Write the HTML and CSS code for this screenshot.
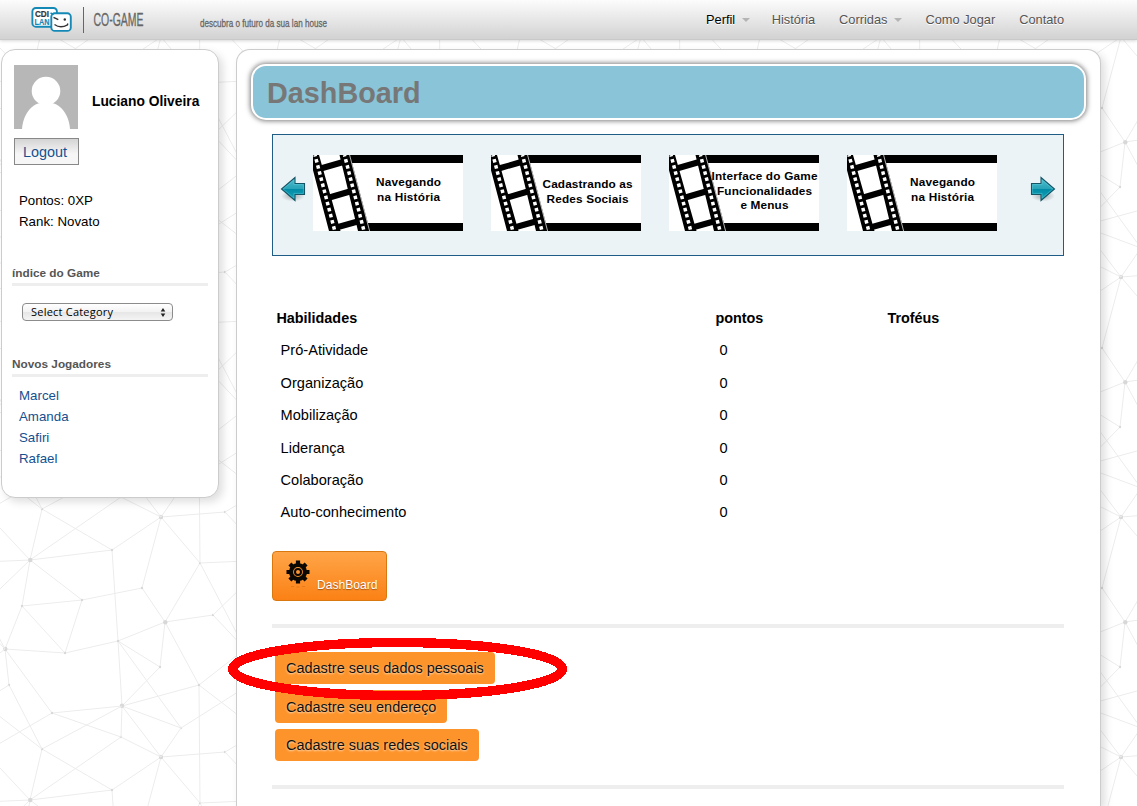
FILE: index.html
```html
<!DOCTYPE html>
<html lang="pt-BR">
<head>
<meta charset="utf-8">
<title>CO-GAME</title>
<link rel="stylesheet" href="styles.css">
</head>
<body>
<svg class="net" width="1137" height="806" aria-hidden="true">
  <defs>
    <g id="web">
      <path d="M42 29L30 80M42 29L112 70M112 70L30 80M112 70L161 37M30 80L-40 83M30 80L-27 135M30 80L-15 32M30 80L82 120M30 80L22 126M42 29L122 -14M30 80L121 17M112 70L118 161L122 226M161 37L142 108L82 120L22 126L65 173M22 126L5 169M82 120L65 173L5 169M65 173L118 161L165 142M118 161L160 187M118 161L181 248M142 108L165 142L160 187M165 142L200 83M165 142L213 135M165 142L199 205M160 187L122 226L199 205M122 226L181 248M122 226L52 233M122 226L121 257M122 226L161 277M52 233L121 257L161 277M181 248L161 277M161 37L225 32M161 37L200 83M200 83L245 169M199 205L200 323M213 135L245 169M199 205L245 169M199 205L282 269M181 248L249 205M52 233L-15 272M5 169L9 205L42 269M5 169L52 233" fill="none" stroke="#ececec"/>
      <g fill="#d8d8d8"><circle cx="30.3" cy="80" r="2.2"/><circle cx="161" cy="37" r="2.2"/><circle cx="165.3" cy="142.3" r="2.2"/><circle cx="122" cy="225.7" r="2.2"/><circle cx="5.3" cy="169" r="2.2"/>
      <circle cx="42" cy="29" r="1.2"/><circle cx="112" cy="70" r="1.2"/><circle cx="22" cy="126" r="1.2"/><circle cx="82" cy="120" r="1.2"/><circle cx="142" cy="108" r="1.2"/><circle cx="118" cy="161" r="1.2"/><circle cx="65" cy="173" r="1.2"/><circle cx="9" cy="205" r="1.2"/><circle cx="52" cy="233" r="1.2"/><circle cx="160" cy="187" r="1.2"/><circle cx="199" cy="205" r="1.2"/><circle cx="200" cy="83" r="1.2"/><circle cx="213" cy="135" r="1.2"/><circle cx="225" cy="32" r="1.2"/><circle cx="181" cy="8" r="1.2"/><circle cx="121" cy="17" r="1.2"/></g>
    </g>
    <pattern id="tile" width="240" height="240" patternUnits="userSpaceOnUse">
      <use href="#web"/><use href="#web" x="240"/><use href="#web" x="-240"/><use href="#web" y="240"/><use href="#web" y="-240"/><use href="#web" x="-240" y="-240"/><use href="#web" x="240" y="-240"/><use href="#web" x="-240" y="240"/><use href="#web" x="240" y="240"/>
    </pattern>
    <symbol id="film" viewBox="0 0 150 76">
      <rect width="150" height="76" fill="#fff"/>
      <path d="M36 0H150V8H38ZM53 68H150V76H56Z"/>
      <path d="M-4 0H6L27.500 76H16ZM26.500 0H37L57 76H45Z"/>
      <path d="M6 14L32 6.500M13 43.500L42 35M20 73.500L50 65" stroke="#000" stroke-width="6"/>
      <path d="M2 0L21.800 76M31.500 0L51 76" stroke="#fff" stroke-width="3.500" stroke-dasharray="3.500 2.800" stroke-dashoffset="2" fill="none"/>
      <path d="M36.600 0L56.600 76" stroke="#fff" stroke-width=".7"/>
    </symbol>
    <linearGradient id="teal" x1="0" y1="0" x2="0" y2="1"><stop offset="0" stop-color="#4ec0d0"/><stop offset=".48" stop-color="#2aa3b8"/><stop offset=".52" stop-color="#028ba6"/><stop offset="1" stop-color="#16a5b8"/></linearGradient>
    <radialGradient id="shade"><stop offset="0" stop-color="#000" stop-opacity=".3"/><stop offset="1" stop-color="#000" stop-opacity="0"/></radialGradient>
    <symbol id="arrow" viewBox="0 0 26 28">
      <ellipse cx="13" cy="21" rx="12" ry="5.500" fill="url(#shade)"/>
      <path d="M1.500 8.500H11V2.500L24.500 14L11 25.500V19.500H1.500Z" fill="url(#teal)" stroke="#155566" stroke-width="1.100"/>
      <path d="M2.600 9.600H12.100V5L22.800 14L12.100 23V18.400H2.600Z" fill="none" stroke="#6ed1dd" stroke-width=".7" opacity=".6"/>
    </symbol>
  </defs>
  <rect width="1137" height="806" fill="url(#tile)"/>
</svg>

<header class="top">
  <svg class="brand" width="420" height="39">
    <rect x="32.400" y="8" width="24.500" height="18.700" rx="3.500" fill="#fff" stroke="#1489b6" stroke-width="1.900"/>
    <rect x="51.300" y="13.300" width="19.500" height="17.600" rx="3.500" fill="#fff" stroke="#1489b6" stroke-width="1.900"/>
    <text x="35" y="17" textLength="14" lengthAdjust="spacingAndGlyphs" class="cdi">CDI</text>
    <text x="34.500" y="25" textLength="15" lengthAdjust="spacingAndGlyphs" class="cdi lan">LAN</text>
    <path d="M50.500 13L53.500 14.500" stroke="#1489b6" stroke-width="1.500"/>
    <path d="M53.500 17.300L58.300 19.700M54.500 24.500Q60.500 29 67.500 24.800L67.800 23.500" fill="none" stroke="#333" stroke-width="1.400"/><circle cx="64.800" cy="19.500" r="1.200" fill="#333"/>
    <path d="M83.500 7V33" stroke="#666"/>
    <text x="93.500" y="26" textLength="50" lengthAdjust="spacingAndGlyphs" class="name">CO-GAME</text>
    <text x="200" y="26.500" textLength="127" lengthAdjust="spacingAndGlyphs" class="tag">descubra o futuro da sua lan house</text>
  </svg>
  <nav class="menu">
    <a class="on drop">Perfil</a><a>História</a><a class="drop">Corridas</a><a>Como Jogar</a><a>Contato</a>
  </nav>
</header>

<div class="page">
  <aside class="side">
    <div class="user">
      <svg class="avatar" viewBox="0 0 64 64"><rect width="64" height="64" fill="#b7b7b7"/><circle cx="32" cy="26" r="14.300" fill="#fff"/><path d="M8 64C9 50 17 39 27 38H37C47 39 55 50 56 64Z" fill="#fff"/></svg>
      <strong>Luciano Oliveira</strong>
    </div>
    <a class="logout">Logout</a>
    <div class="stats"><div>Pontos: 0XP</div><div>Rank: Novato</div></div>
    <h3>índice do Game</h3>
    <div class="select"><span>Select Category</span><svg width="6" height="9" viewBox="0 0 6 9"><path d="M3 0L5.300 3.500H.7ZM3 9L.7 5.500H5.300Z" fill="#222"/></svg></div>
    <h3 class="players">Novos Jogadores</h3>
    <ul><li>Marcel</li><li>Amanda</li><li>Safiri</li><li>Rafael</li></ul>
  </aside>

  <main class="main">
    <h1>DashBoard</h1>
    <section class="reel">
      <svg class="arr prev"><use href="#arrow"/></svg>
      <div class="films">
        <svg width="150" height="76"><use href="#film"/><text x="95.500" y="31" textLength="65">Navegando</text><text x="95.500" y="46" textLength="63">na História</text></svg>
        <svg width="150" height="76"><use href="#film"/><text x="96.500" y="32.500" textLength="90">Cadastrando as</text><text x="96.500" y="47.500" textLength="82">Redes Sociais</text></svg>
        <svg width="150" height="76"><use href="#film"/><text x="95.500" y="24.500" textLength="106">Interface do Game</text><text x="95.500" y="39.500" textLength="95">Funcionalidades</text><text x="95.500" y="54" textLength="48">e Menus</text></svg>
        <svg width="150" height="76"><use href="#film"/><text x="95.500" y="31" textLength="65">Navegando</text><text x="95.500" y="46" textLength="63">na História</text></svg>
      </div>
      <svg class="arr"><use href="#arrow"/></svg>
    </section>
    <div class="skills">
      <b>Habilidades</b><b>pontos</b><b>Troféus</b>
      <span>Pró-Atividade</span><span>0</span><span></span>
      <span>Organização</span><span>0</span><span></span>
      <span>Mobilização</span><span>0</span><span></span>
      <span>Liderança</span><span>0</span><span></span>
      <span>Colaboração</span><span>0</span><span></span>
      <span>Auto-conhecimento</span><span>0</span><span></span>
    </div>
    <a class="dash">
      <svg width="24" height="28" viewBox="-12 -12 24 28"><circle r="7" fill="none" stroke="#0b0703" stroke-width="4.200"/><path d="M0 -11.500V-7M0 7V11.500M-11.500 0H-7M7 0H11.500M-8.100 -8.100L-5 -5M5 5L8.100 8.100M-8.100 8.100L-5 5M5 -5L8.100 -8.100" stroke="#0b0703" stroke-width="4.200"/><circle r="3" fill="none" stroke="#0b0703" stroke-width="2"/><path d="M-7 14.500H-4M-1.500 15H1.500M4 14.500H7" stroke="#a84e00" opacity=".25"/></svg>
      <span>DashBoard</span>
    </a>
    <section class="tasks">
      <a>Cadastre seus dados pessoais</a>
      <a class="mid">Cadastre seu endereço</a>
      <a>Cadastre suas redes sociais</a>
      <svg class="mark" width="342" height="66"><ellipse cx="170.500" cy="33" rx="165" ry="26.500" fill="none" stroke="#f00" stroke-width="9.400" shape-rendering="crispEdges"/></svg>
    </section>
  </main>
</div>
</body>
</html>
```
FILE: styles.css
```css
* { box-sizing: border-box; }
body {
  margin: 0;
  height: 806px;
  overflow: hidden;
  background: #fff;
  color: #000;
  font-family: "Liberation Sans", Arial, sans-serif;
}
.net { position: absolute; top: 0; left: 0; z-index: -1; }

.top {
  height: 40px;
  display: flex;
  justify-content: space-between;
  background: linear-gradient(#fcfcfc, #d2d2d2);
  border-bottom: 1px solid #c9c9c9;
  box-shadow: 0 1px 3px rgba(0, 0, 0, .16);
}
.cdi { font: bold 8.4px "Liberation Sans", sans-serif; fill: #333; stroke: #333; stroke-width: .2; }
.lan { fill: #1489b6; stroke: #1489b6; }
.name { font: 18.5px "Liberation Sans", sans-serif; fill: #666; stroke: #666; stroke-width: .3; }
.tag { font: 11.5px "Liberation Sans", sans-serif; fill: #666; stroke: #666; stroke-width: .3; }
.menu { display: flex; gap: 24px; padding: 12px 73px 0 0; font-size: 12.8px; line-height: 16px; color: #555; text-shadow: 0 1px 0 #fff; }
.menu .on { color: #000; margin-right: -1.500px; }
.drop::after {
  content: "";
  display: inline-block;
  margin: 0 -1px 2px 7px;
  border: 4px solid transparent;
  border-top-color: #b4b4b4;
  border-bottom: 0;
}

.page { display: flex; align-items: flex-start; gap: 17px; height: 766px; padding: 9px 0 0 1px; overflow: hidden; }
.side, .main {
  background: #fff;
  border: 1px solid #ccc;
  border-radius: 14px;
  box-shadow: 4px 4px 9px rgba(0, 0, 0, .13);
}
.side { width: 218px; height: 449px; padding: 15px 10px 0; font-size: 13.3px; }
.user { display: flex; align-items: center; gap: 14px; padding-left: 2px; height: 64px; font-size: 13.8px; white-space: nowrap; }
.user strong { padding-top: 8px; }
.avatar { width: 64px; height: 64px; flex: none; }
.logout {
  display: block;
  width: 65px;
  height: 27px;
  margin: 9px 0 0 2px;
  padding-left: 8px;
  border: 1px solid #888;
  background: linear-gradient(#d4d4d4, #f6f6f6 60%);
  color: #145090;
  font-size: 14.4px;
  line-height: 27px;
}
.stats { padding: 25px 0 0 7px; line-height: 21px; }
h3 {
  margin: 32px 0 0;
  height: 22px;
  border-bottom: 3px solid #eee;
  color: #555;
  font-size: 11.8px;
  line-height: 18px;
}
.select {
  display: flex;
  justify-content: space-between;
  align-items: center;
  width: 151px;
  height: 18px;
  margin: 17px 0 0 10px;
  padding: 0 6px 0 8px;
  border: 1px solid #8c8c8c;
  border-radius: 4px;
  background: linear-gradient(#fff, #f2f2f2 50%, #e6e6e6 52%, #f4f4f4);
  font: 11px/14px "Open Sans", "Noto Sans", sans-serif;
  letter-spacing: .22px;
}
.players { margin-top: 34px; }
ul { list-style: none; margin: 8px 0 0; padding: 0 0 0 7px; color: #145090; line-height: 21px; }

.main { width: 865px; height: 757px; padding: 14px 14px 0; border-bottom: 0; border-radius: 14px 14px 0 0; }
h1 {
  margin: 0;
  height: 56px;
  padding-left: 14px;
  border: 2px solid #fff;
  border-radius: 15px;
  background: #89c4d8;
  box-shadow: 0 0 5px 1px rgba(0, 0, 0, .5);
  color: #777;
  font-size: 28.8px;
  line-height: 54px;
}
.reel {
  display: flex;
  justify-content: space-between;
  margin: 14px 22px 0 21px;
  width: 792px;
  height: 122px;
  padding: 20px 7px 0;
  border: 1px solid #1f5c86;
  background: #ebf3f6;
}
.arr { width: 26px; height: 28px; margin-top: 20px; }
.prev { transform: scaleX(-1); }
.films { display: flex; gap: 28px; margin-right: 26px; }
.films text { font: bold 11.8px "Liberation Sans", sans-serif; text-anchor: middle; }
.skills {
  display: grid;
  grid-template-columns: 439px 172px 1fr;
  grid-auto-rows: 32.4px;
  margin: 46px 0 0 25.4px;
  font-size: 14.6px;
  line-height: 32.2px;
}
.skills b { font-size: 14.4px; }
.skills span { padding-left: 4.2px; }
.dash {
  display: flex;
  width: 115px;
  height: 50px;
  margin: 22px 0 0 21px;
  padding: 8px 0 0 13px;
  gap: 7px;
  border: 1px solid #d9780f;
  border-radius: 4px;
  background: linear-gradient(#ffa548, #fb8115);
  color: #fff;
  font-size: 12.1px;
  text-shadow: 0 1px 1px rgba(80, 40, 0, .5);
}
.dash span { padding-top: 18px; }
.tasks {
  position: relative;
  display: flex;
  flex-direction: column;
  align-items: flex-start;
  gap: 6px;
  width: 792px;
  height: 165px;
  margin: 23px 0 0 21px;
  padding: 24px 3px 0;
  border: solid #eee;
  border-width: 4px 0;
}
.tasks a {
  height: 32.5px;
  padding: 0 11px;
  border-radius: 4px;
  background: #fd942b;
  color: #111;
  font-size: 14.47px;
  line-height: 32px;
  text-shadow: 0 1px 2px rgba(255, 255, 255, .7);
}
.tasks .mid { line-height: 34px; }
.mark { position: absolute; left: -45px; top: 8px; }
```
